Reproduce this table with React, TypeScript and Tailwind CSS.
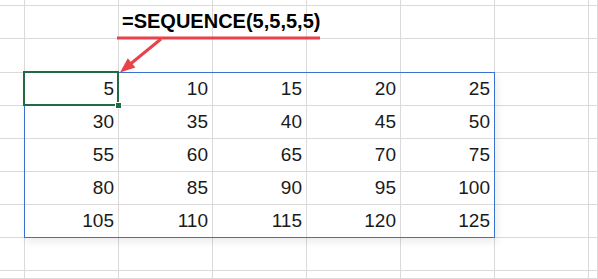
import React from "react";

const data = [
  [5, 10, 15, 20, 25],
  [30, 35, 40, 45, 50],
  [55, 60, 65, 70, 75],
  [80, 85, 90, 95, 100],
  [105, 110, 115, 120, 125],
];

// 8 columns x 10 rows of sheet cells; data sits in rows 3-7, columns 1-5
const ROWS = 10;
const COLS = 8;

const Cell = ({ r, c }: { r: number; c: number }) => {
  const inData = r >= 3 && r <= 7 && c >= 1 && c <= 5;
  const isFormula = r === 1 && c === 2;
  return (
    <div className="relative border-r border-b border-[#dadada] min-w-0">
      {inData && (
        <div className="h-full flex items-center justify-end pr-[4px] text-[19px] text-[#1a1a1a] font-['Liberation_Sans',Arial,sans-serif]">
          {data[r - 3][c - 1]}
        </div>
      )}
      {isFormula && (
        <div className="absolute z-10 left-[3px] top-0 whitespace-nowrap leading-[30px] text-[20px] font-bold text-black font-['Liberation_Sans',Arial,sans-serif]">
          =SEQUENCE(5,5,5,5)
        </div>
      )}
    </div>
  );
};

export default function App() {
  const cells = [];
  for (let r = 0; r < ROWS; r++) {
    for (let c = 0; c < COLS; c++) {
      cells.push(<Cell key={`${r}-${c}`} r={r} c={c} />);
    }
  }

  return (
    <div className="relative w-[598px] h-[279px] overflow-hidden bg-white">
      <div className="grid h-full grid-cols-[25px_repeat(6,94px)_1fr] grid-rows-[6px_33px_34px_repeat(6,33px)_1fr]">
        {cells}
      </div>

      {/* spill range */}
      <div className="absolute left-[24px] top-[72px] w-[471px] h-[166px] border border-[#3a72d2] shadow-[2px_4px_8px_rgba(0,0,0,0.08)]" />

      {/* active cell */}
      <div className="absolute left-[23px] top-[71px] w-[96px] h-[35px] border-2 border-[#1f6b43]" />
      <div className="absolute left-[115px] top-[102px] w-[7px] h-[7px] bg-[#1f6b43] border border-white" />

      {/* annotation */}
      <svg className="absolute left-0 top-0 z-20" width="598" height="279">
        <rect x="117" y="36.5" width="203" height="3" fill="#e8434a" />
        <line x1="161" y1="39" x2="131" y2="63.5" stroke="#e8434a" strokeWidth="3" />
        <polygon points="120,72.5 135.4,67.6 127.8,58.3" fill="#e8434a" />
      </svg>
    </div>
  );
}
